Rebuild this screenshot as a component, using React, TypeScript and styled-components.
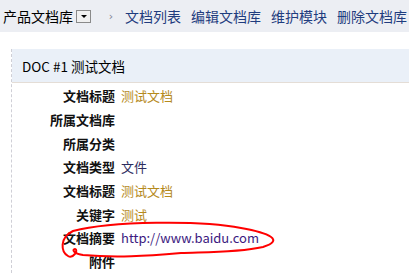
import { type FC } from "react";
import styled, { createGlobalStyle } from "styled-components";

const GlobalStyle = createGlobalStyle`
  html, body {
    margin: 0;
    padding: 0;
    background: #ffffff;
  }
  body {
    font-family: "Noto Sans CJK SC", "Noto Sans", sans-serif;
    width: 409px;
    height: 273px;
    overflow: hidden;
  }
`;

const TopBar = styled.div`
  height: 32px;
  display: flex;
  align-items: center;
  padding-left: 3px;
  background: #eceef3;
  font-size: 14px;
  white-space: nowrap;
`;

const Select = styled.div`
  display: flex;
  align-items: center;
  gap: 3px;
  color: #000;
`;

const DropButton = styled.span`
  width: 13px;
  height: 11px;
  border: 1px solid #8a8a8a;
  background: #f0f0f0;
  display: flex;
  align-items: center;
  justify-content: center;
  margin-top: 1px;

  &::after {
    content: "";
    border-left: 3px solid transparent;
    border-right: 3px solid transparent;
    border-top: 3px solid #000;
  }
`;

const Separator = styled.span`
  display: inline-block;
  width: 6px;
  text-align: center;
  color: #7d8492;
  font-family: "DejaVu Sans", sans-serif;
  font-size: 11px;
  margin: 0 11px 0 17px;
`;

const NavList = styled.nav`
  display: flex;
  gap: 10px;
`;

const NavLink = styled.a`
  color: #1f3c7e;
  text-decoration: none;
`;

const Panel = styled.section`
  position: relative;
  margin: 17px 0 0 11px;
  border-left: 1px dashed #cfcfd6;
  height: 224px;
  font-size: 13px;
`;

const PanelHeader = styled.div`
  height: 33px;
  display: flex;
  align-items: center;
  padding-left: 10px;
  background: #eaf0f8;
  border-bottom: 1px solid #e4ddd6;
  color: #000;
  font-size: 13.5px;
`;

const Fields = styled.dl`
  margin: 0;
  padding-top: 1px;
  display: grid;
  grid-template-columns: 103px auto;
  grid-auto-rows: 23.7px;
  column-gap: 6px;
  align-items: center;
`;

const Label = styled.dt`
  text-align: right;
  font-weight: bold;
  color: #111;
`;

const Value = styled.dd<{ tone?: "gold" | "navy" | "link" }>`
  margin: 0;
  color: ${({ tone }) =>
    tone === "gold" ? "#b58a1c" : tone === "link" ? "#3c1a80" : "#2c2c5e"};
`;

const Scribble = styled.svg`
  position: absolute;
  left: -11px;
  top: -49px;
  pointer-events: none;
`;

type Field = { label: string; value?: string; tone?: "gold" | "navy" | "link" };

const fields: Field[] = [
  { label: "文档标题", value: "测试文档", tone: "gold" },
  { label: "所属文档库" },
  { label: "所属分类" },
  { label: "文档类型", value: "文件", tone: "navy" },
  { label: "文档标题", value: "测试文档", tone: "gold" },
  { label: "关键字", value: "测试", tone: "gold" },
  { label: "文档摘要", value: "http://www.baidu.com", tone: "link" },
  { label: "附件" },
];

const navItems = ["文档列表", "编辑文档库", "维护模块", "删除文档库"];

const App: FC = () => {
  return (
    <>
      <GlobalStyle />
      <TopBar>
        <Select>
          产品文档库
          <DropButton />
        </Select>
        <Separator>›</Separator>
        <NavList>
          {navItems.map((item) => (
            <NavLink key={item} href="#">
              {item}
            </NavLink>
          ))}
        </NavList>
      </TopBar>
      <Panel>
        <PanelHeader>DOC #1 测试文档</PanelHeader>
        <Fields>
          {fields.map((f, i) => (
            <div key={i} style={{ display: "contents" }}>
              <Label>{f.label}</Label>
              <Value tone={f.tone}>{f.value}</Value>
            </div>
          ))}
        </Fields>
        <Scribble width="409" height="273" viewBox="0 0 409 273">
          <path
            d="M 72 231 C 110 221, 200 220, 240 228 C 268 233, 284 240, 262 247 C 235 253, 200 252, 180 253 C 145 256, 115 258, 82 255 C 74 254, 70 250, 74 249 C 78 250, 72 259, 67 256 C 60 252, 58 238, 72 231"
            fill="none"
            stroke="#f00"
            strokeWidth="2"
            strokeLinecap="round"
            strokeLinejoin="round"
          />
        </Scribble>
      </Panel>
    </>
  );
};

export default App;
